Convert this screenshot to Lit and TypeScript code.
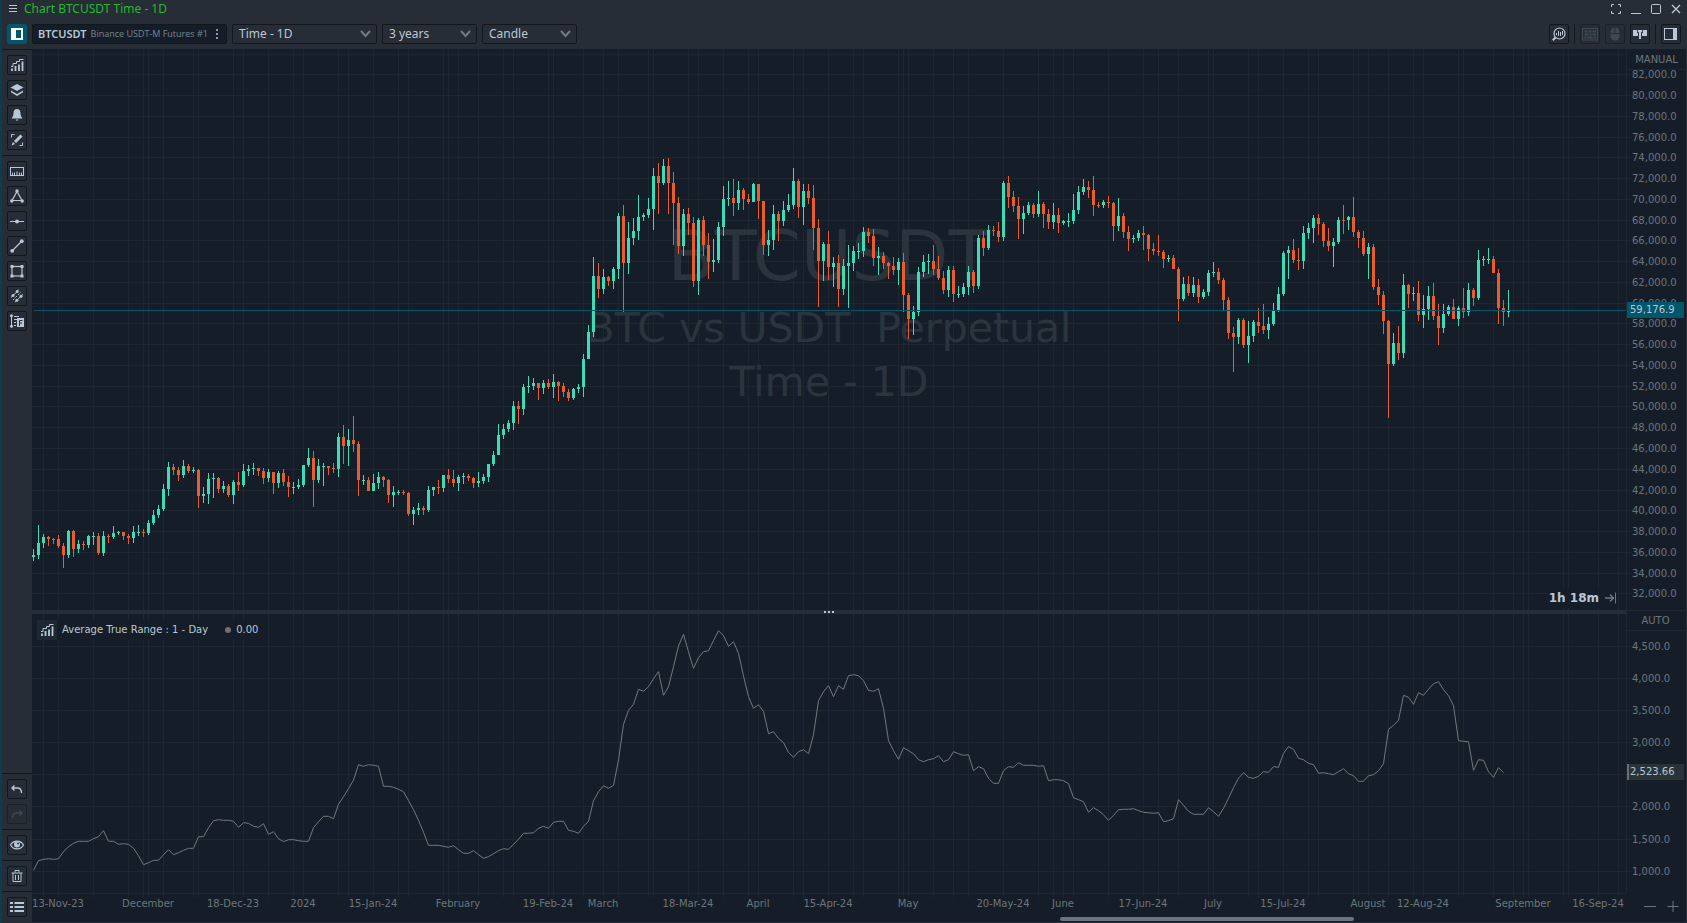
import { LitElement, html, svg, css } from "lit";
import { customElement } from "lit/decorators.js";
import { classMap } from "lit/directives/class-map.js";

/* ---------- data ---------- */

// Distance between two daily bars.
const BAR = 5;

// Daily bars: direction, high, body top, body bottom, low.
// Every group has its own vertical origin; the values are thirds of a pixel below it.
const CANDLES: [number, string][] = [
  [341, `u477,495,501,513 u405,459,495,507 u432,441,459,474 d438,441,447,468 d444,447,450,462 d435,447,468,474
   d459,468,495,534 u420,423,495,504 d420,423,477,501 u450,462,477,489 d453,462,465,480 u435,438,465,474
   u426,438,441,465 d429,438,489,495 u423,438,489,498 d432,438,441,459 u408,429,441,447 u423,426,429,435
   d426,426,438,450 d432,438,444,462 u408,426,444,459 u405,426,429,438 d417,426,429,441 u390,399,429,435
   u360,375,399,405 u345,357,375,384 u282,297,357,363 u216,231,297,318 d222,231,240,255 d231,240,255,273
   u210,228,255,264 d222,228,243,249 u231,240,243,249 d237,240,318,354 u291,312,318,339 u249,267,312,342
   u249,264,267,324 d261,264,297,309 u273,288,297,309 d282,288,315,321 u270,276,315,342 d246,276,285,303
   u222,243,285,291 u225,237,243,258 u219,234,237,255 d234,234,243,258 d234,243,264,282 u237,246,264,276
   d246,246,279,312 u243,249,279,294 d237,249,276,288 d258,276,291,321 u276,291,294,312 u267,285,291,297
   u225,225,285,291 u174,204,225,231 d183,204,270,351 u207,228,270,279 u219,228,231,288 d228,228,234,255
   d219,234,237,249 u129,141,237,261 d105,141,168,222 u117,150,168,228 d78,150,162,186 d153,162,270,318
   u255,270,273,285 d261,270,303,303 u252,279,303,303 u246,261,279,297 d258,261,270,291 d267,270,315,339
   u288,306,315,351 u300,306,309,315 d300,306,309,315 d306,309,372,378 u351,360,372,405 u339,354,360,375
   d348,354,360,375 u288,300,360,366`],
  [101, `u1011,1011,1020,1038 d990,1011,1014,1032 u975,975,1014,1026 d957,975,987,999 d960,987,999,1011 u975,981,999,1023
   u969,978,981,1002 d972,978,984,993 d981,984,999,1014 u966,993,999,1011 u972,981,993,1002 u942,942,981,996
   u903,915,942,948 u822,855,915,915 u822,837,855,867 u810,819,837,846 u753,768,819,840 d753,768,777,822
   u702,711,777,795 u678,708,711,729 u684,699,708,720 d699,699,714,750 u690,699,714,732 d687,699,711,717
   u672,696,711,744 d693,696,708,753 d699,708,726,741 d717,726,744,753 u714,717,744,750 u702,711,717,729
   u612,627,711,741 u525,546,627,627 u321,378,546,561 d339,378,417,444 u357,381,417,432 d378,381,393,408
   u351,357,393,417 u189,198,357,387 d165,198,339,486 u216,264,339,372 u204,243,264,285 u135,201,243,270
   u189,195,201,213 u144,177,195,204 u54,78,177,240 d39,78,99,192 u27,48,99,105 d24,48,99,192
   d66,99,159,285 d141,159,288,312 u177,192,288,318 d174,192,219,255 d201,219,393,411 u204,210,393,435
   d198,210,285,318 d249,285,336,387 u267,330,336,366 u216,231,330,339 u108,147,231,258 u93,144,147,168
   d87,144,159,198 u93,120,159,180 d114,120,147,180 d132,147,156,162 u99,102,156,156 d102,102,153,207
   d153,153,285,315 u240,270,285,318 u165,192,270,300 d183,192,213,273 u153,180,213,228 u132,165,180,186
   u54,93,165,177 d87,93,171,204 u102,123,171,225 d102,123,144,162 d105,144,234,300 d207,234,333,471
   u276,282,333,393 d243,282,351,390 u321,339,351,411 d315,339,417,471 u327,348,417,435 u285,339,348,474
   u288,303,339,363 u279,303,306,327 u231,246,303,321 d234,246,258,279 d237,258,324,348 u291,318,324,375
   d306,318,339,357 d336,339,348,387 d321,348,360,375 u324,336,360,405 d309,336,435,486 d429,435,507,567
   u468,486,507,555 u351,366,486,498 u315,336,366,381 u312,333,336,372 d285,333,357,375 d318,357,384,390
   d363,384,420,432 u348,360,420,441 d348,360,432,456 u408,432,435,444 u399,411,432,441 u348,366,411,435
   d360,366,408,429 u255,264,408,417 d243,264,294,318 u225,240,294,300 d228,240,243,258 d216,243,261,276
   u93,99,261,273 d78,99,141,174 d123,141,168,186 d141,168,207,267 u168,189,207,252 u156,165,189,195
   d159,165,192,204 u123,162,192,201 d156,162,192,234 d177,192,216,237 u159,195,216,237 d174,195,219,249
   u210,213,219,225 u189,213,216,231 u132,180,213,222 u108,126,180,192 u87,111,126,135 d93,111,120,144
   d78,120,165,198 d156,165,168,174 u150,156,165,174 d138,156,159,174 d156,159,228,273 u144,198,228,243
   d189,198,246,264 d228,246,267,303 u255,264,267,279 u240,249,264,273 d228,249,255,300 d252,255,297,333
   d279,297,303,315 d255,303,306,318 d300,306,327,354`],
  [131, `u225,234,237,246 d225,234,267,267 d261,267,357,423 u291,312,357,363 d288,312,339,348 u291,315,339,351
   d297,315,351,369 u327,336,351,357 u270,279,336,348 u246,276,279,291 d264,276,300,312 d294,300,360,390
   d351,360,459,477 d441,459,471,576 u414,420,471,492 d414,420,495,504 u423,468,495,549 u420,426,468,486
   d384,426,438,459 d372,438,450,462 u411,432,450,477 u369,393,432,438 u321,342,393,396 u213,219,342,348
   u198,210,219,297 d177,210,240,249 d204,240,243,270 u138,159,243,267 u129,144,159,177 u105,114,144,189
   d102,114,132,165 d126,132,183,201 d144,183,198,213 u174,186,198,261 u111,120,186,192 d75,120,123,162
   u108,111,120,150 d51,111,156,171 d150,156,174,204 d153,174,222,228 u189,201,222,297 d192,201,321,330
   d297,321,345,375 d333,345,423,462 d420,423,552,714 u459,489,552,558 d438,489,519,540 u282,315,519,534
   d312,315,342,384 u321,339,342,363 d303,339,405,423 u345,387,405,444 u318,348,387,420 d309,348,408,420
   d372,408,444,495 u372,402,444,459 u375,381,402,408 d357,381,417,417 u378,384,417,438 d324,384,396,414
   u309,330,396,408 d324,330,354,378 u210,240,354,360 u228,237,240,258 u204,237,240,252 d228,237,279,279
   d267,279,384,432 d360,384,396,438 u330,393,396,411`],
];

// Average True Range, one value per bar, same encoding as the bars.
const ATR: [number, string][] = [
  [146, `331 302 298 296 298 296 275 260 250 244 244 244 236 230 212 244 244 253 251 253 265 287 314 308 301 301 284 269
   284 278 271 265 265 230 230 203 182 179 181 181 184 202 188 190 199 202 191 223 215 236 245 239 239 242`],
  [-124, `1054 1054 1013 995 979 979 986 943 920 896 870 824 829 824 826 829 889 889 892 898 905 932 959 991 1027 1066
   1066 1066 1069 1072 1067 1079 1090 1090 1082 1094 1105 1100 1091 1082 1076 1078 1063 1048 1030 1030 1028 1015 1009
   1015 997 994 994 1021 1024 1030 1009 994 932 905 887 895 886 810 703 661 643 598 604 590 566 545 616 590 530 468 433
   485 535 503 485 482`],
  [-14, `122 92 107 139 125 160 228 290 325 314 334 401 395 415 428 457 472 455 449 461 404 302 275 257 290 257 268 227
   224 227 242 271 274 266 325 422 452 478 443 452 461 479 485 479 476 467 485 479 455 461 466 464 512 500 506 535 550
   550 512 500 502 488 496 496 496 499 497 542 539 539 542 551 593 599 605 637 623 632 644 661 646 629`],
  [56, `418 418 416 422 427 428 430 428 455 452 446 389 406 424 433 433 433 413 425 439 415 385 353 325 308 322 325 319
   305 307 290 292 250 230 238 265 269 280 284 310 308 311 314 305 296 311 317 334 334 317 314 302 281 178 166 151 76
   82 103 68 76 58 41 35 59 77 107 212 214 215 301 269 271 305 322 293 308`],
];

// Bars that carry a vertical grid line.
const GRID_BARS = [
  2, 5, 12, 19, 22, 23, 26, 32, 33, 40, 42, 47, 52, 54, 61, 63, 68, 73, 75, 82, 83, 85, 89, 94, 96, 103, 104, 110, 114,
  117, 123, 124, 131, 133, 138, 143, 145, 152, 154, 159, 164, 166, 173, 174, 175, 180, 184, 187, 194, 201, 204, 206,
  208, 215, 222, 225, 229, 235, 236, 243, 245, 250, 255, 257, 264, 265, 267, 271, 276, 278, 285, 286, 292, 296, 298,
  299, 306, 307, 313, 317,
];

const DATES: [number, string][] = [
  [5, "13-Nov-23"], [23, "December"], [40, "18-Dec-23"], [54, "2024"], [68, "15-Jan-24"], [85, "February"],
  [103, "19-Feb-24"], [114, "March"], [131, "18-Mar-24"], [145, "April"], [159, "15-Apr-24"], [175, "May"],
  [194, "20-May-24"], [206, "June"], [222, "17-Jun-24"], [236, "July"], [250, "15-Jul-24"], [267, "August"],
  [278, "12-Aug-24"], [298, "September"], [313, "16-Sep-24"],
];

const fmt = (n: number) => n.toLocaleString("en-US", { minimumFractionDigits: 1 });
const barX = (i: number) => i * BAR + 1;

// Horizontal levels of both panes: label and offset from the pane's top.
const PRICES = Array.from({ length: 27 }, (_, k) => ({ label: fmt(84000 - k * 2000), y: Math.round(4.54 + k * 20.76) }));
const RANGES = Array.from({ length: 8 }, (_, k) => ({ label: fmt(4500 - k * 500), y: Math.round(32.1 + k * 32.08) }));
const LAST_PRICE_Y = 261;

// Heights of the mode buttons that stand above the two scales.
const PRICE_HEAD = 21;
const RANGE_HEAD = 17;

const candles = CANDLES.flatMap(([origin, rows]) =>
  rows.trim().split(/\s+/).map((row) => {
    const [high, top, bottom, low] = row.slice(1).split(",").map((v) => Math.round(origin + Number(v) / 3));
    return { up: row[0] === "u", high, top, bottom, low };
  }),
);

const atr = ATR.flatMap(([origin, row]) => row.trim().split(/\s+/).map((v) => origin + Number(v) / 3));

/* ---------- icons, all on a 14 x 14 box ---------- */

const icons = {
  menu: svg`<path d="M1 3.5h8M1 6.5h8M1 9.5h8"/>`,
  fullscreen: svg`<path d="M2.5 5V2.5H5M9 2.5h2.500V5M11.500 9v2.500H9M5 11.500H2.500V9"/>`,
  minimize: svg`<path d="M2 11.500h10"/>`,
  maximize: svg`<rect x="2.500" y="2.500" width="9" height="9" rx="1"/>`,
  close: svg`<path d="M3 3l8 8M11 3l-8 8" stroke-width="1.300"/>`,
  panelLeft: svg`<rect x="1" y="1" width="12" height="12" class="f"/><rect x="6" y="3" width="5" height="8" fill="#00566b" stroke="none"/>`,
  panelRight: svg`<rect x="0.500" y="1.500" width="12" height="11"/><rect x="9" y="1" width="4" height="12" class="f"/>`,
  more: svg`<rect x="6" y="2" width="2" height="2" class="f"/><rect x="6" y="6" width="2" height="2" class="f"/><rect x="6" y="10" width="2" height="2" class="f"/>`,
  bars: svg`<path d="M2 13v-2.500M5.500 13V8M9 13V6.500M12.500 13V3.500" stroke-width="1.800"/><path d="M1 8.500h2V5.500h3.500V3.500H9.500V1.500h4"/>`,
  layers: svg`<path d="M7 1l6.500 3.500L7 8 .5 4.500z" class="f"/><path d="M1 7.500L7 11l6-3.500v1.800L7 13 1 9.300z" class="f"/>`,
  bell: svg`<path d="M7 1c2.500 0 3.500 2 3.500 4 0 2.500.7 3.800 2 5.500h-11c1.300-1.700 2-3 2-5.500 0-2 1-4 3.500-4zM5.500 11.500h3L7 13z" class="f"/>`,
  brush: svg`<path d="M1.500 4.500v-3h3M12.500 9.500v3h-3"/><path d="M5 9L11.500 2.500" stroke-width="3"/><path d="M1.500 12.500l1.500-3.500 2.200 2z" class="f"/>`,
  ruler: svg`<rect x=".5" y="3.500" width="13" height="8"/><path d="M2.500 11V8.500M4.500 11V8.500M7 11V7.500M9.500 11V8.500M11.500 11V8.500"/>`,
  triangle: svg`<path d="M7 2.500L2 11.500h10z" stroke-width="1.200"/><circle cx="7" cy="2" r="1.700" class="f"/><circle cx="1.800" cy="12" r="1.700" class="f"/><circle cx="12.200" cy="12" r="1.700" class="f"/>`,
  hline: svg`<path d="M0 7.500h14"/><circle cx="7" cy="7.500" r="2" class="f"/>`,
  trend: svg`<path d="M2.500 11.500l9-9" stroke-width="1.200"/><circle cx="2.200" cy="11.800" r="1.900" class="f"/><circle cx="11.800" cy="2.200" r="1.900" class="f"/>`,
  rect: svg`<rect x="2" y="2.500" width="10" height="9.500" stroke-width="1.200"/><rect x=".5" y="1" width="3" height="3" class="f"/><rect x="10.500" y="1" width="3" height="3" class="f"/><rect x=".5" y="10.500" width="3" height="3" class="f"/><rect x="10.500" y="10.500" width="3" height="3" class="f"/>`,
  channel: svg`<path d="M1 8.500L8.800.8M5 13.200L13 5.300"/><circle cx="3" cy="6.500" r="1.500" class="f"/><circle cx="7.200" cy="2.500" r="1.500" class="f"/><circle cx="6.900" cy="11.300" r="1.500" class="f"/><circle cx="11" cy="7.300" r="1.500" class="f"/><path d="M3 11L11 3" stroke-dasharray="2 1.500"/>`,
  profile: svg`<path d="M1.500 1v12M4 2.500h5M4 5.500h3M4 8.500h2M4 11.500h2"/><circle cx="1.500" cy="1.800" r="1.500" class="f"/><circle cx="1.500" cy="12.200" r="1.500" class="f"/><rect x="7" y="4" width="7" height="9" class="f"/><path d="M9.500 12V6.500H12.500M9.500 9h2.500" stroke="#272d36"/>`,
  undo: svg`<path d="M4.500 3.500L2 6l2.500 2.500M2 6h5.500C10 6 11.500 7.500 11.500 11" stroke-width="1.400"/>`,
  redo: svg`<path d="M9.500 3.500L12 6 9.500 8.500M12 6H6.500C4 6 2.500 7.500 2.500 11" stroke-width="1.400"/>`,
  eye: svg`<path d="M.5 7C3.500 1.800 10.500 1.800 13.500 7 10.500 12.200 3.500 12.200.5 7z" stroke-width="1.200"/><circle cx="7" cy="6.500" r="3" class="f"/><circle cx="8" cy="5.500" r="1" fill="#272d36" stroke="none"/>`,
  trash: svg`<path d="M1.500 4h11M5 3.500v-2h4v2M3 4v8.500h8V4M5.500 6v5M8.500 6v5"/>`,
  list: svg`<path d="M0 3h3M4.500 3H14M0 7h3M4.500 7H14M0 11h3M4.500 11H14" stroke-width="2"/>`,
  lens: svg`<circle cx="7.500" cy="6.500" r="5.500" stroke-width="1.200"/><path d="M3.500 10.500L.8 13.200" stroke-width="2"/><path d="M4.500 6v2M6.500 4v5M8.500 5v4M10.500 4v4"/>`,
  keyboard: svg`<rect x="-.5" y="1.500" width="15" height="11.500"/><path d="M1.500 4.500h3M5.500 4.500h3M9.500 4.500h3.500M1.500 7.500h4M6.500 7.500h2M9.500 7.500h3.500M1.500 10.500h2M4.500 10.500h5M10.500 10.500h2.500" stroke-width="2"/>`,
  mouse: svg`<path d="M6.500.8V6H2.500c0-3 1.200-5.200 4-5.200zM7.500.8V6h4c0-3-1.200-5.200-4-5.200zM2.500 7h9v2c0 6-9 6-9 0z" class="f"/>`,
  split: svg`<path d="M0 3h4v3h1v3H0zM14 3h-4v3H9v3h5z" class="f"/><path d="M4.800 3h4.400v2.200H8V12H6V5.200H4.800z" class="f"/>`,
  goEnd: svg`<path d="M1 7h8M6 3.500L9.500 7 6 10.500" stroke-width="1.500"/><path d="M11.500 1.500v11"/>`,
  minus: svg`<path d="M1 7.500h12"/>`,
  plus: svg`<path d="M1.500 7.500h11M7 2v11"/>`,
};

type IconName = keyof typeof icons;

const icon = (name: IconName) => html`<svg class="icon" viewBox="0 0 14 14" aria-hidden="true">${icons[name]}</svg>`;

/* ---------- component ---------- */

@customElement("app-root")
export class AppRoot extends LitElement {
  static styles = css`
    :host {
      display: block;
      height: 100vh;
      --panel: #272d36;
      --plot: #151e28;
      --edge: #12171c;
      --grid: #1c2730;
      --ink: #b9c7d6;
      --muted: #6c757c;
      --accent: #00566b;
      color: var(--ink);
      font: 12px/16px "Noto Sans", "Open Sans", sans-serif;
    }
    * { box-sizing: border-box; }
    .window {
      display: grid;
      grid-template-rows: 18px 31px minmax(0, 1fr);
      height: 100%;
      background: var(--panel);
      border-left: 2px solid #0a3e4f;
      overflow: hidden;
    }
    button {
      display: grid;
      place-items: center;
      padding: 0;
      border: 0;
      background: none;
      color: inherit;
      font: inherit;
    }
    .icon {
      width: 14px;
      height: 14px;
      display: block;
      fill: none;
      stroke: currentColor;
      overflow: visible;
    }
    .f { fill: currentColor; stroke: none; }

    .titlebar { display: flex; align-items: center; padding: 0 1px 0 4px; }
    .title { margin: 0; flex: 1; font-size: 12px; font-weight: 400; color: #22b82c; }
    .titlebar button { width: 20px; height: 18px; }
    .titlebar .menu { width: 18px; }

    .toolbar { display: flex; align-items: center; gap: 5px; padding: 0 6px 0 5px; }
    .box {
      width: 20px;
      height: 20px;
      flex: none;
      border: 1px solid var(--edge);
      border-radius: 2px;
    }
    .box.active { background: var(--accent); border-color: var(--accent); color: #fff; }
    .box:disabled { color: #3f4851; border-color: #1c2128; }
    .symbol {
      display: flex;
      align-items: center;
      width: 195px;
      height: 20px;
      padding: 0 1px 0 5px;
      border: 1px solid var(--edge);
      border-radius: 2px;
      background: var(--plot);
      white-space: nowrap;
    }
    .symbol b { font-size: 11px; font-weight: 600; }
    .symbol span { flex: 1; padding-left: 4px; font: 9px/16px "Open Sans", "Noto Sans", sans-serif; color: #7a8590; }
    .symbol button { width: 16px; height: 18px; color: #8d98a3; }
    .pick { position: relative; display: flex; }
    .pick select {
      appearance: none;
      height: 20px;
      padding: 0 24px 0 6px;
      border: 1px solid var(--edge);
      border-radius: 2px;
      background: var(--panel);
      color: inherit;
      font: inherit;
    }
    .wide { width: 145px; }
    .narrow { width: 95px; }
    .pick svg {
      position: absolute;
      right: 6px;
      top: 6px;
      width: 11px;
      height: 8px;
      fill: none;
      stroke: #717b85;
      stroke-width: 2;
      pointer-events: none;
    }
    .grow { flex: 1; }
    .rule { width: 1px; height: 20px; background: var(--edge); }

    .main { display: grid; grid-template-columns: 30px minmax(0, 1fr); min-height: 0; }
    .side { display: flex; flex-direction: column; min-height: 0; padding-bottom: 1px; }
    .group {
      display: flex;
      flex-direction: column;
      gap: 5px;
      padding: 5px;
      border-top: 1px solid var(--edge);
    }

    .chart {
      display: grid;
      grid-template-columns: minmax(0, 1fr) 60px;
      grid-template-rows: minmax(0, 561fr) 4px minmax(0, 279fr) 29px;
      background: var(--plot);
      border-right: 1px solid var(--panel);
      border-bottom: 1px solid var(--panel);
      min-height: 0;
    }
    .pane { position: relative; min-height: 0; overflow: hidden; }
    .pane > svg, .scale > svg, .dates { display: block; width: 100%; height: 100%; }
    svg text { font-family: "DejaVu Sans", Verdana, sans-serif; font-size: 10px; fill: var(--muted); }
    .grid { fill: none; stroke: var(--grid); shape-rendering: crispEdges; }
    .up { fill: #3ddbb8; }
    .down { fill: #e95c2b; }
    .mark text { fill: #2b343d; font-size: 41px; text-anchor: middle; white-space: pre; }
    .mark .big { font-size: 69px; }
    .last { fill: var(--accent); }
    .atr { fill: none; stroke: #74777a; }
    .countdown {
      position: absolute;
      right: 8px;
      bottom: 2px;
      display: flex;
      align-items: center;
      gap: 5px;
      height: 20px;
      background: var(--plot);
      font: bold 12px/20px "DejaVu Sans", Verdana, sans-serif;
    }
    .countdown button { color: #6d7883; }
    .legend {
      position: absolute;
      left: 5px;
      top: 6px;
      display: flex;
      align-items: center;
      height: 20px;
      background: var(--plot);
      font: 10px/20px "DejaVu Sans", Verdana, sans-serif;
    }
    .legend button { width: 20px; height: 20px; background: #1e2831; margin-right: 5px; }
    .dot { width: 6px; height: 6px; margin: 0 5px 0 17px; border-radius: 3px; background: #6f6f6f; }

    .scale { display: flex; flex-direction: column; min-height: 0; border-left: 1px solid var(--grid); overflow: hidden; }
    .scale.upper { grid-row: 1; grid-column: 2; }
    .scale.lower { grid-row: 3; grid-column: 2; }
    .divider { border-top: 1px solid var(--grid); border-left: 1px solid var(--grid); }
    .mode {
      width: 100%;
      flex: none;
      border-bottom: 1px solid var(--grid);
      color: var(--muted);
      font: 10px/12px "DejaVu Sans", Verdana, sans-serif;
    }
    .upper .mode { height: 21px; padding-top: 1px; }
    .lower .mode { height: 17px; padding: 0 2px 2px 0; }
    .scale > svg { flex: 1; min-height: 0; overflow: visible; }
    .scale .tag { fill: var(--ink); }
    .tagbox { fill: #2a3338; }
    .tagedge { fill: #6d6d6b; }

    .splitter {
      display: flex;
      justify-content: center;
      align-items: center;
      gap: 2px;
      background: #252d36;
    }
    .splitter i { width: 2px; height: 2px; background: var(--ink); }
    .timeline { position: relative; grid-column: 1; border-top: 1px solid var(--grid); min-height: 0; }
    .dates text { text-anchor: middle; }
    .thumb {
      position: absolute;
      left: 64.500%;
      width: 18.440%;
      bottom: 1px;
      height: 4px;
      border-radius: 2px;
      background: #6a7581;
    }
    .zoom { display: flex; align-items: center; justify-content: flex-end; gap: 9px; padding: 0 6px 3px 0; color: var(--muted); }
  `;

  private tool(name: IconName, label: string, opts: { active?: boolean; disabled?: boolean } = {}) {
    return html`<button
      class=${classMap({ box: true, active: !!opts.active })}
      aria-label=${label}
      title=${label}
      ?disabled=${opts.disabled}
    >${icon(name)}</button>`;
  }

  private pick(id: string, label: string, value: string, width: string) {
    return html`<div class="pick">
      <select id=${id} class=${width} aria-label=${label}><option>${value}</option></select>
      <svg viewBox="0 0 11 8" aria-hidden="true"><path d="M1 1l4.500 5L10 1" /></svg>
    </div>`;
  }

  private gridLines(levels: { y: number }[]) {
    return svg`<g class="grid">
      ${GRID_BARS.map((i) => svg`<line x1=${barX(i) + 0.5} x2=${barX(i) + 0.5} y1="0" y2="100%"/>`)}
      ${levels.map(({ y }) => svg`<line x1="0" x2="100%" y1=${y + 0.5} y2=${y + 0.5}/>`)}
    </g>`;
  }

  private pricePane() {
    return html`<section class="pane" aria-label="Price">
      <svg role="img" aria-label="BTCUSDT daily candles">
        ${this.gridLines(PRICES)}
        <g class="mark">
          <text class="big" x="50%" y="231">BTCUSDT</text>
          <text x="50%" y="293">BTC vs USDT${"\u00a0\u00a0"}Perpetual</text>
          <text x="50%" y="347">Time - 1D</text>
        </g>
        ${candles.map((c, i) => svg`<g class=${c.up ? "up" : "down"}>
          <rect x=${barX(i)} y=${c.high} width="1" height=${Math.max(1, c.low - c.high)}/>
          <rect x=${barX(i) - 1} y=${c.top} width="3" height=${Math.max(1, c.bottom - c.top)}/>
        </g>`)}
        <rect class="last" x="2" y=${LAST_PRICE_Y} width="100%" height="1"/>
      </svg>
      <div class="countdown">1h 18m <button aria-label="Go to the latest bar">${icon("goEnd")}</button></div>
    </section>`;
  }

  private atrPane() {
    return html`<section class="pane" aria-label="Average True Range">
      <svg role="img" aria-label="Average True Range line">
        ${this.gridLines(RANGES)}
        <polyline class="atr" points=${atr.map((y, i) => `${barX(i) + 0.5},${y.toFixed(1)}`).join(" ")}/>
      </svg>
      <div class="legend">
        <button aria-label="Indicator settings">${icon("bars")}</button>
        Average True Range : 1 - Day<span class="dot"></span>0.00
      </div>
    </section>`;
  }

  private scaleLabels(levels: { label: string; y: number }[], head: number) {
    return levels.map(({ label, y }) => svg`
      <path class="grid" d=${`M0 ${y - head + 0.5}h3`}/>
      <text x="5" y=${y - head + 4}>${label}</text>`);
  }

  render() {
    return html`<div class="window">
      <header class="titlebar">
        <button class="menu" aria-label="Menu">${icon("menu")}</button>
        <h1 class="title">Chart BTCUSDT Time - 1D</h1>
        <button aria-label="Full screen">${icon("fullscreen")}</button>
        <button aria-label="Minimize">${icon("minimize")}</button>
        <button aria-label="Maximize">${icon("maximize")}</button>
        <button aria-label="Close">${icon("close")}</button>
      </header>

      <nav class="toolbar" aria-label="Chart settings">
        ${this.tool("panelLeft", "Drawing panel", { active: true })}
        <div class="symbol">
          <b>BTCUSDT</b><span>Binance USDT-M Futures #1</span>
          <button aria-label="Symbol options">${icon("more")}</button>
        </div>
        ${this.pick("interval", "Interval", "Time - 1D", "wide")}
        ${this.pick("range", "History range", "3 years", "narrow")}
        ${this.pick("style", "Chart style", "Candle", "narrow")}
        <span class="grow"></span>
        ${this.tool("lens", "Volume analysis")}
        <span class="rule"></span>
        ${this.tool("keyboard", "Hotkey trading", { disabled: true })}
        ${this.tool("mouse", "Mouse trading", { disabled: true })}
        ${this.tool("split", "Trader panel")}
        <span class="rule"></span>
        ${this.tool("panelRight", "Side panel")}
      </nav>

      <div class="main">
        <nav class="side" aria-label="Tools">
          <div class="group">
            ${this.tool("bars", "Indicators")}
            ${this.tool("layers", "Overlays")}
            ${this.tool("bell", "Alerts")}
            ${this.tool("brush", "Drawings")}
          </div>
          <div class="group grow">
            ${this.tool("ruler", "Ruler")}
            ${this.tool("triangle", "Triangle")}
            ${this.tool("hline", "Horizontal line")}
            ${this.tool("trend", "Trend line")}
            ${this.tool("rect", "Rectangle")}
            ${this.tool("channel", "Channel")}
            ${this.tool("profile", "Volume profile")}
          </div>
          <div class="group">
            ${this.tool("undo", "Undo")}
            ${this.tool("redo", "Redo", { disabled: true })}
          </div>
          <div class="group">${this.tool("eye", "Show drawings")}</div>
          <div class="group">${this.tool("trash", "Delete drawings")}</div>
          <div class="group">${this.tool("list", "Object list")}</div>
        </nav>

        <main class="chart">
          ${this.pricePane()}
          <div class="scale upper">
            <button class="mode">MANUAL</button>
            <svg role="img" aria-label="Price scale">
              ${this.scaleLabels(PRICES.slice(1), PRICE_HEAD)}
              <rect class="last" x="0" y=${LAST_PRICE_Y - PRICE_HEAD - 8} width="57" height="16"/>
              <text class="tag" x="3" y=${LAST_PRICE_Y - PRICE_HEAD + 3}>59,176.9</text>
            </svg>
          </div>
          <div class="splitter"><i></i><i></i><i></i></div>
          <div class="divider"></div>
          ${this.atrPane()}
          <div class="scale lower">
            <button class="mode">AUTO</button>
            <svg role="img" aria-label="Average True Range scale">
              ${this.scaleLabels(RANGES.filter((_, i) => i !== 4), RANGE_HEAD)}
              <rect class="tagbox" x="0" y="133" width="57" height="16"/>
              <rect class="tagedge" x="0" y="133" width="2" height="16"/>
              <text class="tag" x="3" y="144">2,523.66</text>
            </svg>
          </div>
          <div class="timeline">
            <svg class="dates" role="img" aria-label="Dates">
              <g class="grid">
                ${GRID_BARS.map((i) => svg`<line x1=${barX(i) + 0.5} x2=${barX(i) + 0.5} y1="0" y2="3"/>`)}
              </g>
              ${DATES.map(([i, label]) => svg`<text x=${barX(i)} y="13">${label}</text>`)}
            </svg>
            <div class="thumb"></div>
          </div>
          <div class="zoom">
            <button aria-label="Zoom out">${icon("minus")}</button>
            <button aria-label="Zoom in">${icon("plus")}</button>
          </div>
        </main>
      </div>
    </div>`;
  }
}
